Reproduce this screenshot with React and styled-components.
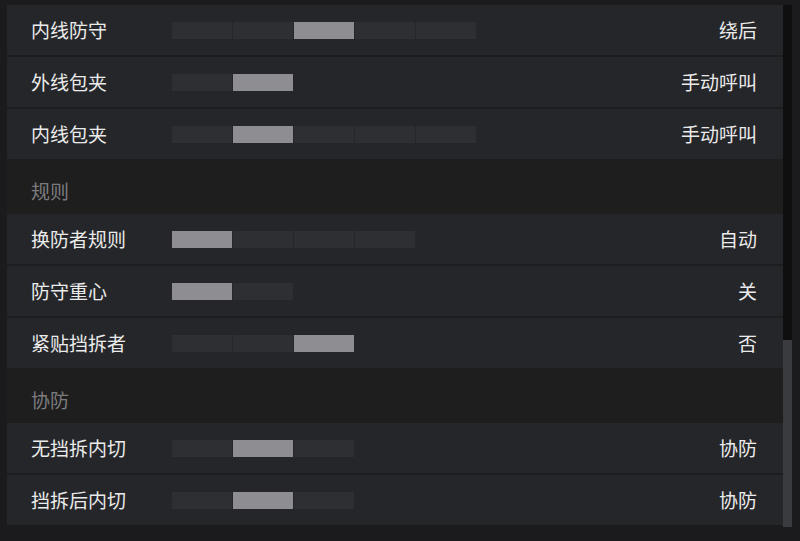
import React from "react";
import styled, { createGlobalStyle } from "styled-components";

const Global = createGlobalStyle`
  html, body { margin: 0; padding: 0; background: #1b1b1d; }
  body { font-family: "Noto Sans CJK SC", "Noto Sans", sans-serif; }
`;

const Screen = styled.div`
  width: 800px;
  height: 541px;
  box-sizing: border-box;
  padding: 5px 0 0 7px;
  display: flex;
  align-items: flex-start;
  background: #1b1b1d;
  overflow: hidden;
`;

const Panel = styled.div`
  width: 776px;
  display: flex;
  flex-direction: column;
`;

const Group = styled.div`
  display: flex;
  flex-direction: column;
`;

const Row = styled.div`
  height: 50px;
  display: grid;
  grid-template-columns: 141px 1fr auto;
  align-items: center;
  padding: 0 26px 0 24px;
  background: #25262a;
  & + & {
    border-top: 2px solid #1c1d1f;
  }
`;

const Label = styled.div`
  font-size: 19px;
  line-height: 24px;
  color: #ebebeb;
  white-space: nowrap;
`;

const Value = styled.div`
  font-size: 19px;
  line-height: 24px;
  color: #ebebeb;
  text-align: right;
  white-space: nowrap;
`;

const Bar = styled.div`
  display: flex;
  gap: 1px;
  height: 17px;
`;

const Seg = styled.div`
  width: 60px;
  height: 100%;
  background: ${(p) => (p.$on ? "#8e8e92" : "#2e2f33")};
`;

const Header = styled.div`
  height: 55px;
  box-sizing: border-box;
  padding: 8px 24px 0;
  display: flex;
  align-items: center;
  background: #1e1e1f;
  font-size: 19px;
  line-height: 24px;
  color: #7c7c7e;
`;

const Scrollbar = styled.div`
  width: 9px;
  height: 522px;
  background: #0f0f10;
  display: flex;
  flex-direction: column;
`;

const Thumb = styled.div`
  margin-top: 335px;
  height: 187px;
  background: #3a3b3e;
`;

const groups = [
  {
    title: null,
    rows: [
      { label: "内线防守", n: 5, hl: 2, value: "绕后" },
      { label: "外线包夹", n: 2, hl: 1, value: "手动呼叫" },
      { label: "内线包夹", n: 5, hl: 1, value: "手动呼叫" },
    ],
  },
  {
    title: "规则",
    rows: [
      { label: "换防者规则", n: 4, hl: 0, value: "自动" },
      { label: "防守重心", n: 2, hl: 0, value: "关" },
      { label: "紧贴挡拆者", n: 3, hl: 2, value: "否" },
    ],
  },
  {
    title: "协防",
    rows: [
      { label: "无挡拆内切", n: 3, hl: 1, value: "协防" },
      { label: "挡拆后内切", n: 3, hl: 1, value: "协防" },
    ],
  },
];

export default function App() {
  return (
    <>
      <Global />
      <Screen>
        <Panel>
          {groups.map((g, gi) => (
            <React.Fragment key={gi}>
              {g.title && <Header>{g.title}</Header>}
              <Group>
                {g.rows.map((r) => (
                  <Row key={r.label}>
                    <Label>{r.label}</Label>
                    <Bar>
                      {Array.from({ length: r.n }).map((_, i) => (
                        <Seg key={i} $on={i === r.hl} />
                      ))}
                    </Bar>
                    <Value>{r.value}</Value>
                  </Row>
                ))}
              </Group>
            </React.Fragment>
          ))}
        </Panel>
        <Scrollbar>
          <Thumb />
        </Scrollbar>
      </Screen>
    </>
  );
}
